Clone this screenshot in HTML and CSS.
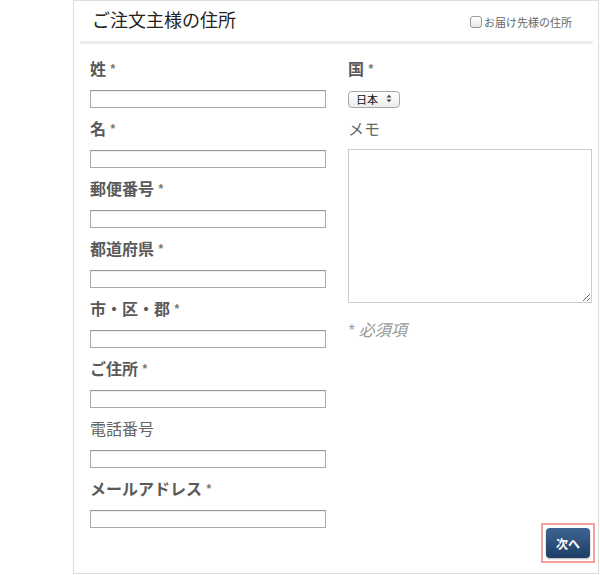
FILE: index.html
```html
<!DOCTYPE html>
<html lang="ja">
<head>
    <meta charset="UTF-8">
    <title>ご注文主様の住所</title>
    <link rel="stylesheet" href="styles.css">
</head>
<body>
<div class="panel">
    <!-- ヘッダー -->
    <div class="panel-header">
        <h2>ご注文主様の住所</h2>
        <label class="ship-check"><input type="checkbox">お届け先様の住所</label>
    </div>
    <div class="panel-rule"></div>

    <div class="panel-body">
        <!-- 左カラム -->
        <div class="col col-left">
            <div class="field"><label class="req">姓 <span class="star">*</span></label><input type="text"></div>
            <div class="field"><label class="req">名 <span class="star">*</span></label><input type="text"></div>
            <div class="field"><label class="req">郵便番号 <span class="star">*</span></label><input type="text"></div>
            <div class="field"><label class="req">都道府県 <span class="star">*</span></label><input type="text"></div>
            <div class="field"><label class="req">市・区・郡 <span class="star">*</span></label><input type="text"></div>
            <div class="field"><label class="req">ご住所 <span class="star">*</span></label><input type="text"></div>
            <div class="field"><label>電話番号</label><input type="text"></div>
            <div class="field"><label class="req">メールアドレス <span class="star">*</span></label><input type="text"></div>
        </div>

        <!-- 右カラム -->
        <div class="col col-right">
            <div class="field">
                <label class="req">国 <span class="star">*</span></label>
                <div class="select-wrap">
                    <select><option>日本</option></select>
                    <svg class="select-arrows" width="6" height="9" viewBox="0 0 6 9"><path d="M0.5 3.5 L3 0.8 L5.5 3.5 Z M0.5 5.5 L3 8.2 L5.5 5.5 Z" fill="#444"/></svg>
                </div>
            </div>
            <div class="field">
                <label>メモ</label>
                <textarea></textarea>
            </div>
            <p class="required-note">* 必須項</p>
            <div class="next-wrap">
                <span class="next-frame"><button class="next-button">次へ</button></span>
            </div>
        </div>
    </div>
</div>
</body>
</html>
```

FILE: styles.css
```css
body {
    margin: 0;
    background-color: #fff;
    font-family: "Liberation Sans", "Noto Sans CJK JP", sans-serif;
    color: #555;
}
.panel {
    box-sizing: border-box;
    width: 526px;
    height: 574px;
    margin-left: 73px;
    border: 1px solid #ddd;
    display: flex;
    flex-direction: column;
}
.panel-header {
    display: flex;
    justify-content: space-between;
    align-items: center;
    height: 40px;
    padding: 0 26px 0 18px;
}
.panel-header h2 {
    margin: 0;
    font-size: 18px;
    font-weight: normal;
    color: #222;
    line-height: 24px;
}
.ship-check {
    display: flex;
    align-items: center;
    font-size: 11px;
    color: #666;
    margin-top: 2px;
}
.ship-check input {
    appearance: none;
    width: 12px;
    height: 12px;
    margin: 0 2px 0 0;
    border: 1px solid #999;
    border-radius: 3px;
    background: linear-gradient(#fff, #e8e8e8);
}
.panel-rule {
    height: 3px;
    margin: 0 5px 0 6px;
    background-color: #ececec;
}
.panel-body {
    flex: 1;
    display: flex;
    gap: 22px;
    padding: 16px 6px 10px 16px;
}
.col {
    display: flex;
    flex-direction: column;
}
.col-left {
    width: 236px;
}
.col-right {
    width: 244px;
}
.field {
    margin-bottom: 12px;
}
.field label {
    display: block;
    height: 20px;
    font-size: 16px;
    line-height: 20px;
    margin-bottom: 10px;
    color: #666;
}
.field label.req {
    font-weight: bold;
    color: #5a5a5a;
}
.star {
    position: relative;
    top: -2px;
    font-size: 12px;
    line-height: 1;
    color: #777;
}
.field input[type="text"] {
    box-sizing: border-box;
    display: block;
    width: 236px;
    height: 18px;
    margin: 0;
    border: 1px solid #aaa;
    border-top-color: #999;
    box-shadow: inset 0 1px 1px rgba(0,0,0,0.08);
    background-color: #fff;
}
.select-wrap {
    position: relative;
    width: 52px;
    margin-top: 1px;
}
.select-wrap select {
    appearance: none;
    box-sizing: border-box;
    width: 52px;
    height: 17px;
    padding: 0 0 0 7px;
    border: 1px solid #a8a8a8;
    border-radius: 4px;
    background: linear-gradient(#fff, #ececec);
    font-family: "Noto Sans CJK JP", sans-serif;
    font-size: 11px;
    color: #111;
    line-height: 15px;
}
.select-arrows {
    position: absolute;
    right: 8px;
    top: 4px;
}
.col-right textarea {
    box-sizing: border-box;
    display: block;
    width: 244px;
    height: 154px;
    margin: -1px 0 0;
    border: 1px solid #ccc;
    resize: both;
}
.required-note {
    margin: 6px 0 0;
    font-size: 16px;
    line-height: 20px;
    font-style: italic;
    color: #9a9a9a;
}
.next-wrap {
    margin-top: auto;
    display: flex;
    justify-content: flex-end;
    margin-right: -3px;
}
.next-frame {
    display: block;
    padding: 3px;
    border: 2px solid #f4a0a0;
}
.next-button {
    display: block;
    width: 44px;
    height: 30px;
    padding: 0;
    border: none;
    border-radius: 4px;
    background: linear-gradient(#3d6591, #1d3d66);
    color: #fff;
    font-family: "Noto Sans CJK JP", sans-serif;
    font-size: 12px;
    font-weight: bold;
    box-shadow: 0 1px 2px rgba(0,0,0,0.3);
}
```
